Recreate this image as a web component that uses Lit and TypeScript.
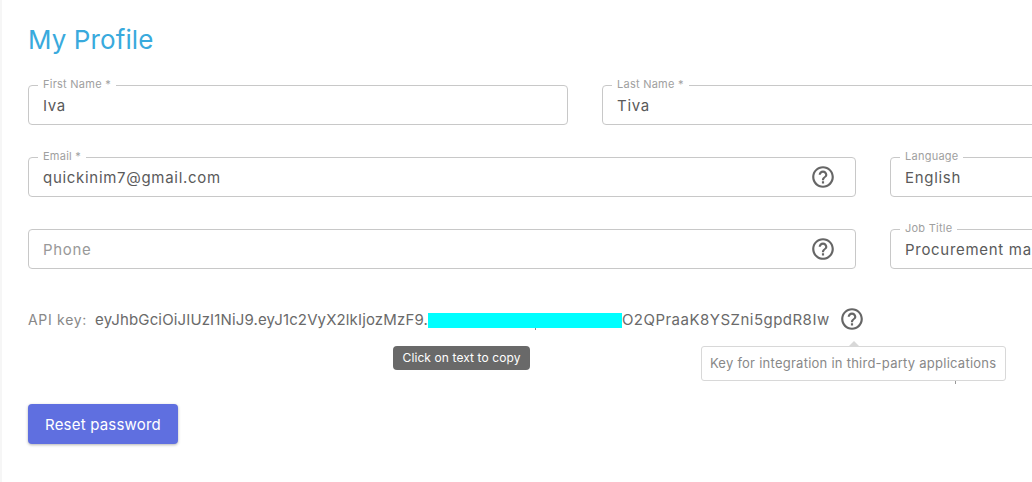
import { LitElement, css, html } from 'lit'
import { customElement } from 'lit/decorators.js'

const helpIcon = html`<svg class="help" viewBox="0 0 24 24" fill="currentColor"><path d="M11 18h2v-2h-2v2zm1-16C6.48 2 2 6.48 2 12s4.48 10 10 10 10-4.48 10-10S17.52 2 12 2zm0 18c-4.41 0-8-3.59-8-8s3.59-8 8-8 8 3.59 8 8-3.59 8-8 8zm0-14c-2.21 0-4 1.79-4 4h2c0-1.1.9-2 2-2s2 .9 2 2c0 2-3 1.75-3 5h2c0-2.25 3-2.5 3-5 0-2.21-1.79-4-4-4z"/></svg>`

@customElement('app-root')
export class AppRoot extends LitElement {
	field(label: string, value: string, cls: string, help = false, placeholder = false) {
		return html`
			<div class="field ${cls}">
				${label ? html`<span class="label">${label}</span>` : ''}
				<span class="value ${placeholder ? 'placeholder' : ''}">${value}</span>
				${help ? helpIcon : ''}
			</div>
		`
	}

	render() {
		return html`
			<div class="page">
				<h1>My Profile</h1>
				<div class="row">
					${this.field('First Name *', 'Iva', 'half')}
					${this.field('Last Name *', 'Tiva', 'half')}
				</div>
				<div class="row">
					${this.field('Email *', 'quickinim7@gmail.com', 'wide', true)}
					${this.field('Language', 'English', 'narrow')}
				</div>
				<div class="row">
					${this.field('', 'Phone', 'wide', true, true)}
					${this.field('Job Title', 'Procurement manager', 'narrow')}
				</div>
				<div class="api">
					<span class="api-label">API key:</span>
					<span class="api-value">eyJhbGciOiJIUzI1NiJ9.eyJ1c2VyX2lkIjozMzF9.<span class="redact"></span><span class="key-end">O2QPraaK8YSZni5gpdR8Iw</span><div class="tip-dark">Click on text to copy</div></span>
					<span class="api-help">
						${helpIcon}
						<div class="tip-light">Key for integration in third-party applications</div>
					</span>
				</div>
				<button>Reset password</button>
			</div>
		`
	}

	static styles = css`
		:host {
			display: block;
			height: 482px;
			overflow: hidden;
			background: #fff;
			font-family: Inter, "Liberation Sans", sans-serif;
		}

		.page {
			width: 1114px;
			height: 482px;
			box-sizing: content-box;
			padding: 24px 0 0 26px;
			border-left: 2px solid #f6f6f6;
			color: #555;
		}

		h1 {
			margin: 0 0 29px;
			font-size: 26px;
			line-height: 32px;
			font-weight: 400;
			color: #39aadd;
			letter-spacing: 0.1px;
		}

		.row {
			display: flex;
			gap: 34px;
			margin-bottom: 32px;
		}

		.field {
			position: relative;
			box-sizing: border-box;
			height: 40px;
			border: 1px solid #c8c8c8;
			border-radius: 4px;
			display: flex;
			align-items: center;
			justify-content: space-between;
			padding: 0 19px 0 14px;
		}

		.half { width: 540px; }
		.wide { width: 828px; }
		.narrow { width: 252px; }

		.label {
			position: absolute;
			left: 9px;
			top: -8px;
			padding: 0 5px;
			background: #fff;
			font-size: 11px;
			line-height: 13px;
			letter-spacing: 0.25px;
			color: #a0a0a0;
		}

		.value {
			font-size: 15px;
			letter-spacing: 0.7px;
			white-space: nowrap;
			color: #5a5a5a;
		}

		.placeholder { color: #999; }

		.help {
			width: 26px;
			height: 26px;
			color: #666;
		}

		.api {
			display: flex;
			align-items: center;
			height: 32px;
			margin-top: 34px;
			margin-bottom: 69px;
			font-size: 14px;
		}

		.api-label {
			color: #888;
			letter-spacing: 0.7px;
			margin-right: 8px;
		}

		.api-value {
			position: relative;
			white-space: nowrap;
			color: #6a6a6a;
			font-size: 15px;
			letter-spacing: 0.14px;
		}

		.key-end { letter-spacing: 0.48px; }

		.redact {
			position: relative;
			display: inline-block;
			vertical-align: middle;
			width: 194px;
			height: 15px;
			background: #00ffff;
		}

		.redact::after {
			content: '';
			position: absolute;
			left: 107px;
			bottom: -2px;
			width: 1px;
			height: 2px;
			background: #888;
		}

		.tip-dark {
			position: absolute;
			left: 298px;
			top: 36px;
			width: 137px;
			height: 24px;
			line-height: 24px;
			text-align: center;
			border-radius: 4px;
			background: #696969;
			color: #fff;
			font-size: 12px;
			letter-spacing: 0.1px;
		}

		.api-help {
			position: relative;
			display: flex;
			margin-left: 9px;
		}

		.tip-light {
			position: absolute;
			top: 40px;
			left: -138px;
			box-sizing: border-box;
			width: 305px;
			height: 35px;
			line-height: 33px;
			text-align: center;
			border: 1px solid #d8d8d8;
			border-radius: 3px;
			background: #fff;
			color: #888;
			font-size: 13px;
			letter-spacing: 0.25px;
			white-space: nowrap;
		}

		.tip-light::before {
			content: '';
			position: absolute;
			left: 146px;
			top: -6px;
			border-left: 6px solid transparent;
			border-right: 6px solid transparent;
			border-bottom: 6px solid #d8d8d8;
		}

		.tip-light::after {
			content: '';
			position: absolute;
			left: 253px;
			top: 34px;
			width: 1px;
			height: 3px;
			background: #999;
		}

		button {
			display: block;
			width: 150px;
			height: 40px;
			border: none;
			border-radius: 4px;
			background: #5f6fe0;
			box-shadow: 0 1px 3px rgba(0, 0, 0, 0.3);
			color: #fff;
			font-family: inherit;
			font-size: 15px;
			letter-spacing: 0.2px;
		}
	`
}
